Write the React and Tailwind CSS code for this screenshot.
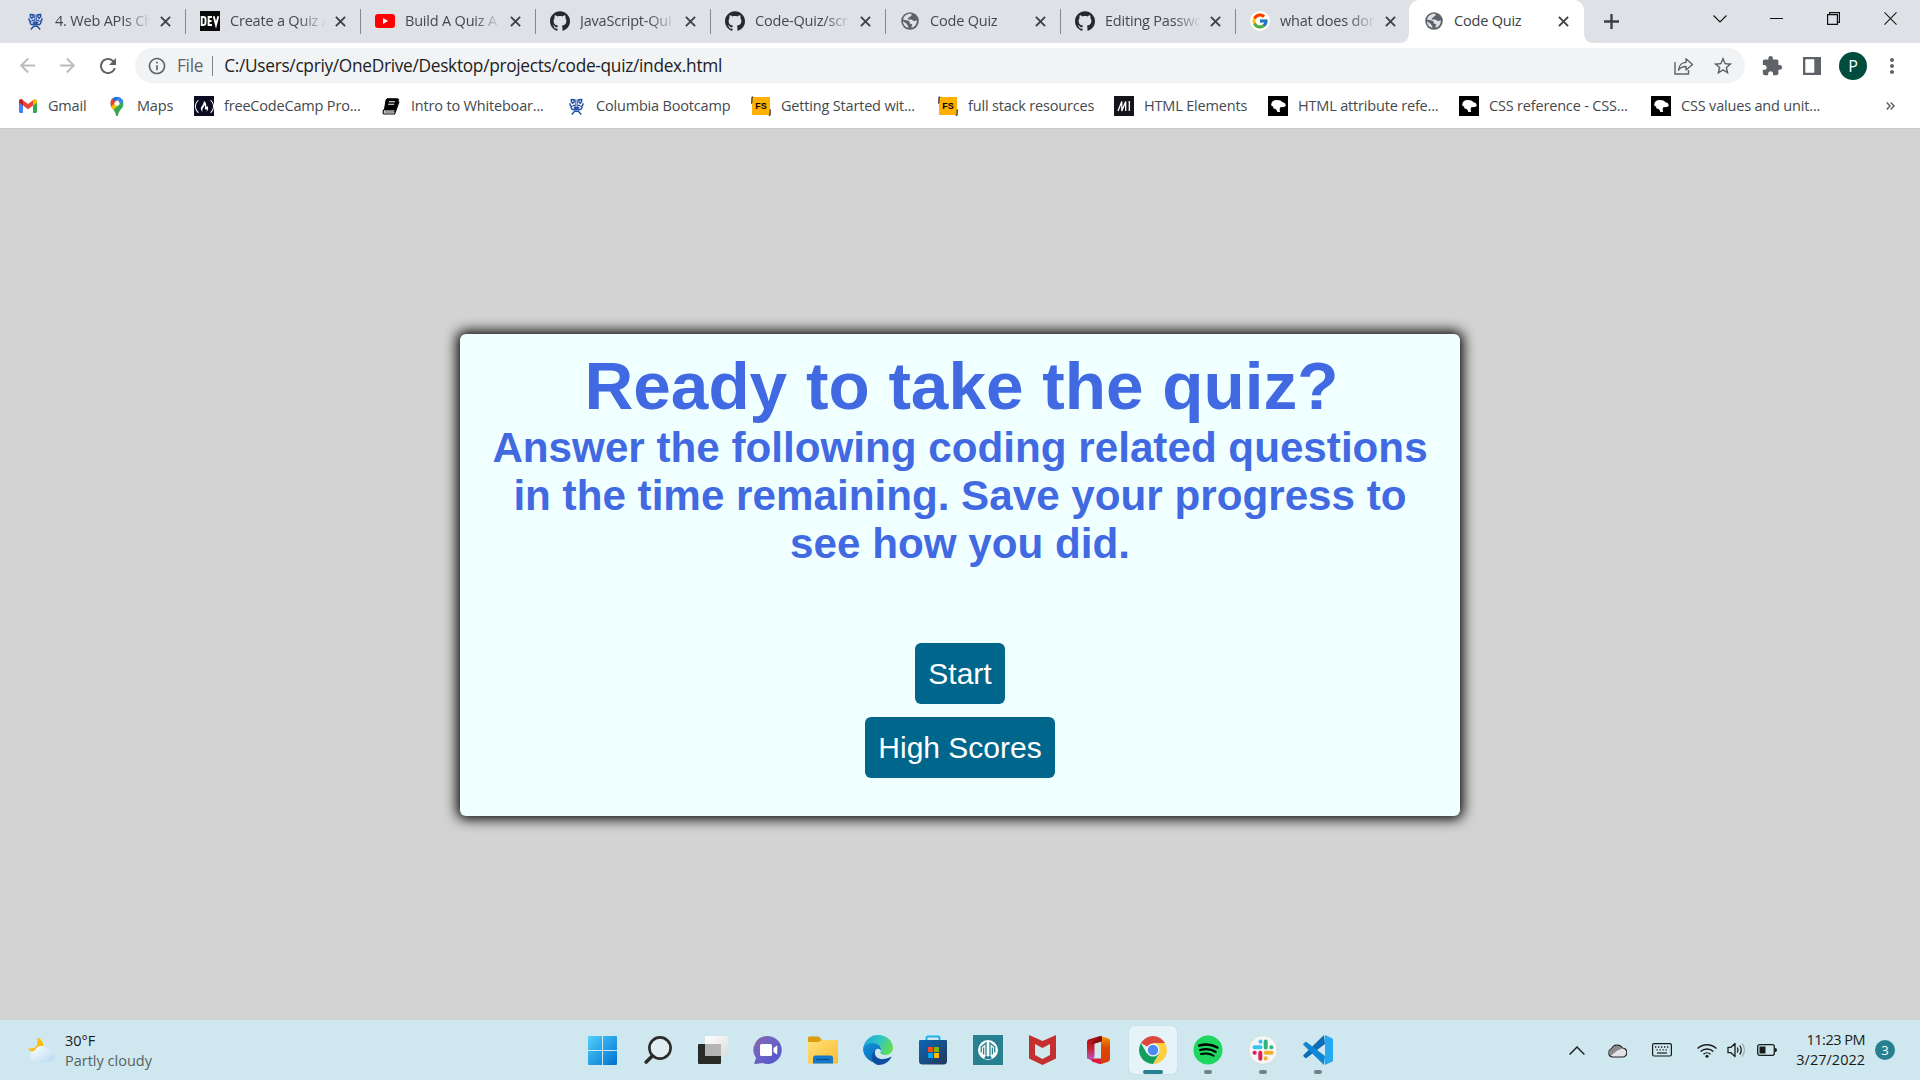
import React from "react";
import { FcGoogle } from "react-icons/fc";
import { SiGithub, SiFreecodecamp } from "react-icons/si";
import {
  MdExtension,
  MdStarBorder,
  MdMoreVert,
  MdRefresh,
  MdInfoOutline,
  MdArrowBack,
  MdArrowForward,
} from "react-icons/md";

/* ---------- favicons ---------- */

const Globe = () => (
  <svg viewBox="0 0 18 18" className="size-[18px]">
    <circle cx="9" cy="9" r="8.8" fill="#5f6368" />
    <path
      d="M10.4 1.9c.7 1.100-.1 2.300-1.300 2.500-1 .2-.9 1.500-1.900 1.700-.8.2-.6 1.300.3 1.500h2.600c1.200 0 1.500 1.100 2.300 1.400.9.3 2.300-.1 3.300-.7.5 3.300-1.600 6.600-4.900 7.500-.7-.5-.3-1.700.3-2.300.5-.6-.1-1.600-1-1.600-1.100 0-1.600-.9-1.600-1.900 0-1-1-1.300-1.900-1.500L2 7.600c.7-3.800 4.600-6.600 8.400-5.700z"
      fill="#dee1e6"
    />
    <path d="M2 9.200l3.600 2.600c.5.400.3 1 .9 1.400.7.400.9 1.200.9 2.500C4.400 15.300 2 12.600 2 9.200z" fill="#dee1e6" />
  </svg>
);

const Github = () => <SiGithub className="size-5 text-[#24292f]" />;

const Dev = () => (
  <svg viewBox="0 0 20 20" className="size-5">
    <rect width="20" height="20" fill="#0a0a0a" />
    <g fill="none" stroke="#fff" strokeWidth="1.900">
      <path d="M1.700 6h1.600q2.200 0 2.200 2.200v3.600q0 2.200-2.200 2.200H1.700z" />
      <path d="M12 6H8.600v8H12M8.600 10h2.900" />
      <path d="M13.700 5.200l2.300 8.800 2.300-8.800" />
    </g>
  </svg>
);

const YouTube = () => (
  <svg viewBox="0 0 20 14" className="h-3.5 w-5">
    <rect width="20" height="14" rx="3" fill="#f00" />
    <path d="M8 4v6l5.200-3z" fill="#fff" />
  </svg>
);

const Crown = () => (
  <svg viewBox="0 0 16 18" className="h-[17px] w-[15px]" fill="none" stroke="#1f4da3" strokeWidth="1.500">
    <path d="M2.500 1.500l3 .3v2.400L4 5.500 2.500 4zM13.500 1.500l-3 .3v2.400L12 5.500 13.500 4z" />
    <path d="M7.200 1.500v11M8.800 1.500v11" strokeWidth="1" />
    <path d="M1.300 5.500q-.8 2.500 1.500 3.500-1.500 1.500.8 3.200h8.800q2.300-1.700.8-3.200 2.300-1 1.500-3.500M4 8h2.500M9.500 8H12M5 10.300h6" />
    <path d="M3 17.500l3-3.500h4l3 3.500" />
  </svg>
);

const GoogleFav = () => (
  <span className="flex size-5 items-center justify-center rounded-full bg-white">
    <FcGoogle className="size-[18px]" />
  </span>
);

const Gmail = () => (
  <svg viewBox="0 0 18 14" className="h-3.5 w-[18px]">
    <path d="M0 2v10.700Q0 14 1.300 14H4V5z" fill="#4285f4" />
    <path d="M18 2v10.700q0 1.300-1.300 1.300H14V5z" fill="#34a853" />
    <path d="M4 1.200l5 3.800 5-3.800v5.300L9 10.200 4 6.500z" fill="#ea4335" />
    <path d="M0 2.200C0 .2 2 -.4 3.300.6L4 1.200v5.300L0 3.600z" fill="#c5221f" />
    <path d="M18 2.200c0-2-2-2.600-3.300-1.600l-.7.600v5.300l4-2.900z" fill="#fbbc04" />
  </svg>
);

const MapsPin = () => (
  <svg viewBox="0 0 14 20" className="h-[19px] w-3.5">
    <clipPath id="pin">
      <path d="M7 0c4 0 7 3 7 6.900 0 5.100-5 6.600-5.900 12.200-.2 1.200-2 1.200-2.200 0C5 13.500 0 12 0 6.900 0 3 3 0 7 0z" />
    </clipPath>
    <g clipPath="url(#pin)">
      <rect width="14" height="20" fill="#34a853" />
      <path d="M3-1h12v5L7 9z" fill="#4285f4" />
      <path d="M0 14V9l7-7 3 5-8 8z" fill="#fbbc04" />
      <path d="M-1 1l3-1 4.500 4.500L0 11z" fill="#ea4335" />
      <path d="M2 2l4-4h5L5.500 5z" fill="#1a73e8" />
    </g>
    <circle cx="7" cy="6.900" r="2.600" fill="#fff" />
  </svg>
);

const Fcc = () => (
  <span className="flex size-5 items-center justify-center bg-[#0a0a23]">
    <SiFreecodecamp className="size-[19px] text-white" />
  </span>
);

const Book = () => (
  <svg viewBox="0 0 18 17" className="h-[17px] w-[18px]">
    <path d="M5 .8h10.500q1.300 0 .9 1.300L13.200 12H2.400L4 2z" fill="#000" stroke="#000" strokeLinejoin="round" />
    <path d="M1.800 11.500Q0 15.900 2.600 16h10L17 3.500" fill="none" stroke="#000" strokeWidth="1.200" />
    <path d="M2.500 14h9.700L16 4.500" fill="none" stroke="#000" strokeWidth=".8" />
    <path d="M6.900 3.800h6M6.200 6.200h6" stroke="#fff" strokeWidth="1.100" />
  </svg>
);

const FullStack = () => (
  <span className="relative flex size-5 items-center justify-center">
    <span className="flex h-[18px] w-[18px] items-center justify-center bg-[#ffb000] font-['Liberation_Sans',sans-serif] text-[9px] font-bold leading-none text-black">
      FS
    </span>
    <svg viewBox="0 0 20 20" className="absolute inset-0 size-5" fill="none" stroke="#2b2b2b" strokeWidth="1.200">
      <path d="M2.200 .8Q.9.800.9 2v3.500Q.9 7 .2 7.500M17.800 19.500q1.300 0 1.300-1.300v-3q0-1.200.7-1.700" />
    </svg>
  </span>
);

const MdnM = () => (
  <svg viewBox="0 0 20 20" className="size-5">
    <rect width="20" height="20" fill="#15141a" />
    <path d="M4 15L7.800 5.500V15l3.900-9.500V15" fill="none" stroke="#fff" strokeWidth="1.300" strokeLinejoin="bevel" />
    <path d="M15.300 5v10" stroke="#fff" strokeWidth="1.300" />
  </svg>
);

const MdnDino = () => (
  <svg viewBox="0 0 20 20" className="size-5">
    <rect width="20" height="20" fill="#000" />
    <path
      d="M3.200 8.200C3.800 5 7 3.600 9.800 4.300c2 -.3 3.300.3 4.400 1.700l2.800 1.300.9 2.500-1.800 1.100-3.700.4c-1 .8-.6 2.600-.4 4.700H9.300c-.2-2-1.300-2.300-2.300-3.200-1.600.1-1.700-1.200-1.900-2.400C3.700 10.200 3 9.500 3.200 8.200z"
      fill="#fff"
    />
  </svg>
);

/* ---------- tab strip ---------- */

const tabs = [
  [Crown, "4. Web APIs Ch"],
  [Dev, "Create a Quiz A"],
  [YouTube, "Build A Quiz A"],
  [Github, "JavaScript-Qui"],
  [Github, "Code-Quiz/scr"],
  [Globe, "Code Quiz"],
  [Github, "Editing Passwo"],
  [GoogleFav, "what does dor"],
];

const Cross = () => (
  <svg viewBox="0 0 12 12" className="size-[11px]" stroke="#3c4043" strokeWidth="2">
    <path d="M1 1l10 10M11 1L1 11" />
  </svg>
);

const Tab = ({ icon: Icon, label, last }) => (
  <div className="flex h-[43px] w-[175px] shrink-0 items-center pb-px pl-3.5">
    <span className="flex w-5 shrink-0 justify-center">
      <Icon />
    </span>
    <span className="ml-2.5 w-24 shrink-0 overflow-hidden whitespace-nowrap text-[14.500px] leading-5 tracking-[-0.200px] text-[#45494d] [mask-image:linear-gradient(to_right,black_72%,transparent)]">
      {label}
    </span>
    <span className="ml-[9px]">
      <Cross />
    </span>
    {!last && <span className="ml-auto h-[25px] w-px bg-[#85888c]" />}
  </div>
);

const TabStrip = () => (
  <div className="flex h-[43px] bg-[#dee1e6] pl-[11px]">
    {tabs.map(([Icon, label], i) => (
      <Tab key={i} icon={Icon} label={label} last={i === tabs.length - 1} />
    ))}
    <div className="relative -ml-[2px] flex h-[43px] w-[175px] shrink-0 items-center rounded-t-[10px] bg-white pb-px pl-[15px]">
      <svg viewBox="0 0 10 10" className="absolute -left-[10px] bottom-0 size-[10px]" fill="#fff">
        <path d="M10 0v10H0Q10 10 10 0z" />
      </svg>
      <svg viewBox="0 0 10 10" className="absolute -right-[10px] bottom-0 size-[10px]" fill="#fff">
        <path d="M0 0v10h10Q0 10 0 0z" />
      </svg>
      <span className="flex w-5 justify-center">
        <Globe />
      </span>
      <span className="ml-2.5 w-[95px] text-[14.500px] leading-5 tracking-[-0.200px] text-[#3c4043]">Code Quiz</span>
      <span className="ml-[9px]">
        <Cross />
      </span>
    </div>
    <div className="flex flex-1 items-center pl-5">
      <svg viewBox="0 0 14 14" className="size-[15px]" stroke="#3c4043" strokeWidth="2.200">
        <path d="M7 0v14M0 7h14" />
      </svg>
    </div>
    <div className="flex h-[37px] items-center pr-px text-[#111]">
      <span className="flex w-[57px] justify-center">
        <svg viewBox="0 0 14 8" className="h-2 w-3.5" fill="none" stroke="currentColor" strokeWidth="1.100">
          <path d="M.5.5L7 7l6.500-6.500" />
        </svg>
      </span>
      <span className="flex w-[57px] justify-center">
        <span className="h-px w-[13px] bg-current" />
      </span>
      <span className="flex w-[57px] justify-center">
        <svg viewBox="0 0 13 13" className="size-[13px]" fill="none" stroke="currentColor" strokeWidth="1.200">
          <path d="M.6 2.600h9.800v9.800H.6zM2.600 2.600v-2h9.800v9.800h-2" />
        </svg>
      </span>
      <span className="flex w-[57px] justify-center">
        <svg viewBox="0 0 14 14" className="size-[13px]" stroke="currentColor" strokeWidth="1.100">
          <path d="M.5.5l13 13M13.500.5l-13 13" />
        </svg>
      </span>
    </div>
  </div>
);

/* ---------- toolbar ---------- */

const Toolbar = () => (
  <div className="flex h-[45px] items-center bg-white text-[#5f6368]">
    <div className="flex w-[135px] items-center pl-4">
      <MdArrowBack className="size-[23px] text-[#babcbe]" />
      <MdArrowForward className="ml-[17px] size-[23px] text-[#babcbe]" />
      <MdRefresh className="ml-[17px] size-6" />
    </div>
    <div className="flex h-[35px] w-[1610px] items-center rounded-full bg-[#f1f3f4] pl-3">
      <MdInfoOutline className="size-5" />
      <span className="ml-[10px] text-[17.300px] leading-5 tracking-[-0.300px]">File</span>
      <span className="ml-[9px] h-5 w-px bg-[#80868b]" />
      <span className="ml-[11px] text-[17.300px] leading-5 tracking-[-0.300px] text-[#202124]">
        C:/Users/cpriy/OneDrive/Desktop/projects/code-quiz/index.html
      </span>
      <span className="ml-auto flex items-center pr-[11px]">
        <svg viewBox="0 0 20 18" className="mr-[18px] h-[18px] w-5" fill="none" stroke="#5f6368" strokeWidth="1.400">
          <path d="M1 5v12h13.500v-4" />
          <path d="M4.500 13C5 8 8.500 5.500 12 5.400V1.800L18.500 7.500 12 13V9.500C9 9.500 6.500 10.300 4.500 13z" strokeLinejoin="round" />
        </svg>
        <MdStarBorder className="size-[22px]" />
      </span>
    </div>
    <div className="flex flex-1 items-center">
      <MdExtension className="ml-4 size-[22px]" />
      <svg viewBox="0 0 18 18" className="ml-5 size-[18px]">
        <path d="M0 0h18v18H0z M2.300 2.300v13.400h9V2.300z" fillRule="evenodd" fill="#5f6368" />
      </svg>
      <span className="ml-[18px] flex size-7 items-center justify-center rounded-full bg-[#004d40] text-[16px] leading-none text-white">
        P
      </span>
      <MdMoreVert className="ml-[13px] size-6" />
    </div>
  </div>
);

/* ---------- bookmarks ---------- */

const bookmarks = [
  [Gmail, "Gmail", "w-[89px]"],
  [MapsPin, "Maps", "w-[87px]"],
  [Fcc, "freeCodeCamp Pro...", "w-[187px]"],
  [Book, "Intro to Whiteboar...", "w-[185px]"],
  [Crown, "Columbia Bootcamp", "w-[185px]"],
  [FullStack, "Getting Started wit...", "w-[187px]"],
  [FullStack, "full stack resources", "w-[176px]"],
  [MdnM, "HTML Elements", "w-[154px]"],
  [MdnDino, "HTML attribute refe...", "w-[191px]"],
  [MdnDino, "CSS reference - CSS...", "w-[192px]"],
  [MdnDino, "CSS values and unit...", "w-[192px]"],
];

const Bookmarks = () => (
  <div className="flex h-10 items-center bg-white pb-1 pl-[18px]">
    {bookmarks.map(([Icon, label, width]) => (
      <div key={label} className={"flex shrink-0 items-center " + width}>
        <span className="flex w-5 justify-center">
          <Icon />
        </span>
        <span className="ml-2.5 whitespace-nowrap text-[14.500px] leading-5 tracking-[-0.180px] text-[#45494d]">
          {label}
        </span>
      </div>
    ))}
    <svg viewBox="0 0 9 8" className="ml-auto mr-[25px] h-2 w-[9px]" fill="none" stroke="#5f6368" strokeWidth="1.500">
      <path d="M.7.5L4 4 .7 7.500M4.700.5L8 4 4.700 7.500" />
    </svg>
  </div>
);

/* ---------- quiz page ---------- */

const Quiz = () => (
  <main className="flex h-[892px] justify-center border-t border-[#c8cacc] bg-[#d3d3d3] pt-[205px] font-['Liberation_Sans',Arial,sans-serif]">
    <section className="flex h-[482px] w-[1000px] flex-col items-center rounded-[6px] bg-[#f0ffff] px-[25px] pt-[13px] text-center shadow-[0_0_12.5px_2.5px_#000]">
      <h1 className="pl-[3px] text-[67.500px] font-bold leading-[77px] text-[#4169e1]">Ready to take the quiz?</h1>
      <h2 className="text-[42.190px] font-bold leading-[48px] text-[#4169e1]">
        Answer the following coding related questions in the time remaining. Save your progress to see how you did.
      </h2>
      <button className="mt-[75px] h-[61px] w-[90px] rounded-[6px] bg-[#00668c] text-[30px] leading-[61px] text-white">
        Start
      </button>
      <button className="mt-[13px] h-[61px] w-[190px] rounded-[6px] bg-[#00668c] text-[30px] leading-[61px] text-white">
        High Scores
      </button>
    </section>
  </main>
);

/* ---------- taskbar ---------- */

const Windows = () => (
  <svg viewBox="0 0 29 29" className="size-[29px]">
    <linearGradient id="win" x1="0" y1="0" x2="1" y2="1">
      <stop offset="0" stopColor="#50d0fb" />
      <stop offset="1" stopColor="#0070cf" />
    </linearGradient>
    <path
      d="M1 0h13v14H0V1q0-1 1-1zM15 0h13q1 0 1 1v13H15zM0 15h14v14H1q-1 0-1-1zM15 15h14v13q0 1-1 1H15z"
      fill="url(#win)"
    />
  </svg>
);

const Search = () => (
  <svg viewBox="0 0 28 28" className="size-7" fill="none" stroke="#2b2b2b">
    <circle cx="16" cy="12" r="10.600" strokeWidth="2.600" fill="#e0edf3" />
    <path d="M8.300 20L2.200 26" strokeWidth="3.600" strokeLinecap="round" />
  </svg>
);

const TaskView = () => (
  <svg viewBox="0 0 30 28" className="h-7 w-[30px]">
    <linearGradient id="tv" x1="0" y1="0" x2="1" y2="1">
      <stop offset="0" stopColor="#fff" />
      <stop offset="1" stopColor="#dcdcdc" />
    </linearGradient>
    <rect y="8" width="23" height="20" rx="1" fill="#2a2a29" />
    <rect x="7" width="23" height="20" rx="1" fill="url(#tv)" />
    <path d="M7 8h16v12H8q-1 0-1-1z" fill="#b4b4b4" />
  </svg>
);

const Chat = () => (
  <svg viewBox="0 0 30 30" className="size-[30px]">
    <linearGradient id="chat" x1="0" y1="0" x2="1" y2="1">
      <stop offset="0" stopColor="#92629f" />
      <stop offset=".35" stopColor="#7264c4" />
      <stop offset="1" stopColor="#4f52cc" />
    </linearGradient>
    <path d="M15 1a14 14 0 1 1-5.500 27l-7 1q-1.500 0-1-1.500L3 23A14 14 0 0 1 15 1z" fill="url(#chat)" />
    <rect x="7" y="9" width="12" height="12" rx="1.500" fill="#fff" />
    <path d="M20.500 13l3-2.200q.8-.4.8.5v7.400q0 .9-.8.5l-3-2.200z" fill="#fff" />
  </svg>
);

const Explorer = () => (
  <svg viewBox="0 0 30 28" className="h-7 w-[30px]">
    <linearGradient id="folder" x1="0" y1="0" x2="1" y2="1">
      <stop offset="0" stopColor="#ffe07a" />
      <stop offset="1" stopColor="#fcbd2d" />
    </linearGradient>
    <path d="M0 2q0-1.500 1.500-1.500h9L14 4h14.500Q30 4 30 5.500V8H0z" fill="#dd9c0b" />
    <path d="M0 6h10.500L14 4h14.500Q30 4 30 5.500v21q0 1-1 1H1q-1 0-1-1z" fill="url(#folder)" />
    <path d="M5 27.500V22q0-2.500 2.500-2.500h15Q25 19.500 25 22v5.500z" fill="#1479cc" />
    <path d="M8.500 23.500h13" stroke="#0a4b8b" strokeWidth="1.200" />
  </svg>
);

const Edge = () => (
  <svg viewBox="0 0 30 30" className="size-[30px]">
    <linearGradient id="edgeTop" x1="0" y1="0.300" x2="1" y2=".6">
      <stop offset="0" stopColor="#1fa5de" />
      <stop offset=".5" stopColor="#30c6c4" />
      <stop offset="1" stopColor="#65df49" />
    </linearGradient>
    <linearGradient id="edgeLow" x1="0" y1="0" x2="1" y2="1">
      <stop offset="0" stopColor="#1590d8" />
      <stop offset="1" stopColor="#0762b5" />
    </linearGradient>
    <path d="M0 15A15 15 0 0 1 15 0c8.500 0 15 6 15 12.800 0 4.400-3.400 7.200-7.500 7.200-3.300 0-5.600-1.300-5.200-2.700C19.500 15 18 10.500 12.500 9.500 6 8.500 1 11 0 15z" fill="url(#edgeTop)" />
    <path d="M0 15C.5 10 6 7.500 11.500 8.500c5 .9 7 3.900 6.400 7.300-.8-2.100-4.300-3-5.700 0-1.900 4.500 2.200 10.200 10.300 10.200A15 15 0 0 1 0 15z" fill="url(#edgeLow)" />
    <path d="M12.200 15.800c-1.900 4.500 2 8.900 8.300 8.300 2.900-.3 5-1.400 6.900-2.200.8-.3 1.100.2.700.8A15 15 0 0 1 15 30C7.500 28.500 7 19 12.200 15.800z" fill="#0d4f9e" />
  </svg>
);

const Store = () => (
  <svg viewBox="0 0 30 30" className="size-[30px]">
    <linearGradient id="store" x1="0" y1="0" x2="1" y2="1">
      <stop offset="0" stopColor="#0968b8" />
      <stop offset="1" stopColor="#243757" />
    </linearGradient>
    <path d="M8.500 6V3Q8.500 1.500 10 1.500h10Q21.500 1.500 21.500 3v3" fill="none" stroke="#20b0ec" strokeWidth="2" />
    <path d="M2 5h26q1 0 1 1v20q0 3.500-3.500 3.500h-21Q1 29.500 1 26V6q0-1 1-1z" fill="url(#store)" />
    <path d="M10 12h5v5h-5z" fill="#f25022" />
    <path d="M16 12h5v5h-5z" fill="#7fba00" />
    <path d="M10 18h5v5h-5z" fill="#00a4ef" />
    <path d="M16 18h5v5h-5z" fill="#ffb900" />
  </svg>
);

const Alpaca = () => (
  <svg viewBox="0 0 30 30" className="size-[30px]">
    <rect width="30" height="30" fill="#26808f" />
    <circle cx="15" cy="15" r="10" fill="#fff" />
    <path d="M8.200 17.500V12L13 8v12M21.800 17.500V12L17 8v12" fill="none" stroke="#26808f" strokeWidth="1.300" />
    <path d="M10.600 19.500v-7M19.400 19.500v-7" stroke="#26808f" strokeWidth="1.300" />
    <path d="M11 23.500l2-3.500 2 1.800L17 20l2 3.500q-4 1.500-8 0z" fill="#26808f" />
  </svg>
);

const McAfee = () => (
  <svg viewBox="0 0 27 30" className="h-[30px] w-[27px]">
    <path d="M0 0l13.500 6L27 0v23.500L13.500 30 0 23.500zM6 9v11l7.500 4 7.500-4V9l-7.500 4z" fill="#c4302f" fillRule="evenodd" />
  </svg>
);

const Office = () => (
  <svg viewBox="0 0 24 30" className="h-[30px] w-6">
    <linearGradient id="offL" x1="0" y1="0" x2="0" y2="1">
      <stop offset="0" stopColor="#9e0b12" />
      <stop offset=".5" stopColor="#c91f2e" />
      <stop offset="1" stopColor="#b65bc4" />
    </linearGradient>
    <linearGradient id="offR" x1="0" y1="0" x2="0" y2="1">
      <stop offset="0" stopColor="#f19a00" />
      <stop offset=".4" stopColor="#df4a07" />
      <stop offset="1" stopColor="#d73b02" />
    </linearGradient>
    <path d="M14 1L2.500 4.500Q1 5 1 7v16.500L4.500 25l3-2q1-.7 1-2V8.500L15.500 6.500V1z" fill="url(#offL)" />
    <path d="M14 1l8 2.200Q24 3.700 24 6v18q0 2.200-2 2.800L15 29V6.500z" fill="url(#offR)" />
    <path d="M4.500 23.500H15V29h-1.500L6 26.500z" fill="#d61e3c" />
    <path d="M14 1l2 .6v4.600l-7.500 2.300L5 9z" fill="#8b0b0c" />
  </svg>
);

const Chrome = () => (
  <svg viewBox="0 0 28 28" className="size-7">
    <path d="M14 14L1.880 7A14 14 0 0 1 26.120 7z" fill="#db4a3c" />
    <path d="M14 14V7h12.120A14 14 0 0 1 14 28l6-10.500z" fill="#ffce44" />
    <path d="M14 14l6 3.500L14 28A14 14 0 0 1 1.880 7l6 10.500z" fill="#10a05c" />
    <circle cx="14" cy="14" r="6.600" fill="#f4f6f7" />
    <circle cx="14" cy="14" r="5.200" fill="#4a8af4" />
  </svg>
);

const Spotify = () => (
  <svg viewBox="0 0 30 30" className="size-[30px]" fill="none" stroke="#000" strokeLinecap="round">
    <circle cx="15" cy="15" r="14.500" fill="#1ed760" stroke="none" />
    <path d="M6.300 10.600c6-1.700 13-1 18 1.900" strokeWidth="2.600" />
    <path d="M7.200 15c5.300-1.500 11-.8 15.300 1.800" strokeWidth="2.300" />
    <path d="M7.800 19.100c4.500-1.200 9-.6 12.800 1.700" strokeWidth="1.900" />
  </svg>
);

const Slack = () => (
  <svg viewBox="0 0 30 30" className="size-[30px]" strokeWidth="4" strokeLinecap="round">
    <circle cx="15" cy="15" r="14.400" fill="#f7f6f6" stroke="#cfcfcf" strokeWidth=".7" />
    <path d="M6.500 12.300h6M12.500 6.500v.2" stroke="#36c5f0" />
    <path d="M17.700 6.500v6M23.500 12.300h-.2" stroke="#2eb67d" />
    <path d="M17.700 17.700h6M17.700 23.500v-.2" stroke="#ecb22e" />
    <path d="M12.300 17.700v6M6.500 17.700h.2" stroke="#e01e5a" />
  </svg>
);

const VsCode = () => (
  <svg viewBox="0 0 30 30" className="size-[30px]">
    <path d="M22 9L3.500 23q-.6.500-1.200 0L.5 21.300q-.6-.7 0-1.300L21 0z" fill="#0a6db5" />
    <path d="M22 21L3.500 7q-.6-.5-1.200 0L.5 8.700q-.6.700 0 1.300L21 30z" fill="#0f87d3" />
    <path d="M22 0l7 3.200q1 .5 1 1.600v20.400q0 1.100-1 1.600L22 30q.5-.5 0-2z" fill="#25a7f2" />
  </svg>
);

const apps = [
  [Windows],
  [Search],
  [TaskView],
  [Chat],
  [Explorer],
  [Edge],
  [Store],
  [Alpaca],
  [McAfee],
  [Office],
  [Chrome, "active"],
  [Spotify, "open"],
  [Slack, "open"],
  [VsCode, "open"],
];

const Weather = () => (
  <svg viewBox="0 0 30 26" className="h-[26px] w-[30px]">
    <linearGradient id="cloud" x1="0" y1="0" x2="1" y2="1">
      <stop offset="0" stopColor="#fff" />
      <stop offset="1" stopColor="#b5d7f0" />
    </linearGradient>
    <path d="M10.500.5q6 2.500 5.800 8.500Q15 15 8 15.300 3 15 1 11.300 8 12.500 10 8q1-3.500.5-7.500z" fill="#fbbd0f" />
    <path d="M8.500 25a5.800 5.800 0 0 1-.6-11.400A7 7 0 0 1 20.300 12a6.600 6.600 0 1 1 2.600 13z" fill="url(#cloud)" />
  </svg>
);

const Taskbar = () => (
  <footer className="flex h-[60px] items-center bg-[#cfe8ef] text-[14.500px] text-[#1b1b1b]">
    <div className="flex w-[575px] items-center pl-[27px]">
      <Weather />
      <div className="ml-2 pt-[2px] leading-5">
        <div>30°F</div>
        <div className="text-[#565f62]">Partly cloudy</div>
      </div>
    </div>
    <div className="flex items-center">
      {apps.map(([Icon, state], i) => (
        <div key={i} className="flex w-[55px] justify-center">
          <div
            className={
              "relative flex size-12 items-center justify-center rounded-[5px] " +
              (state === "active" ? "bg-[#e6f3f8] shadow-[0_0_1px_#9fb8c0]" : "")
            }
          >
            <Icon />
            {state === "active" && <span className="absolute bottom-0 h-1 w-5 rounded-full bg-[#26808f]" />}
            {state === "open" && <span className="absolute bottom-0 h-1 w-2 rounded-full bg-[#728387]" />}
          </div>
        </div>
      ))}
    </div>
    <div className="ml-auto flex items-center pr-[25px]">
      <svg viewBox="0 0 16 9" className="h-[9px] w-4" fill="none" stroke="#1b1b1b" strokeWidth="1.400">
        <path d="M.6 8.400L8 1l7.400 7.400" />
      </svg>
      <svg viewBox="0 0 20 15" className="ml-[22px] h-[15px] w-5">
        <path d="M5 14a4.300 4.300 0 0 1-.4-8.200A6 6 0 0 1 15.300 5 4.500 4.500 0 0 1 15.500 14z" fill="#e3e3e6" stroke="#222" strokeWidth="1.200" />
        <path d="M1.500 10.500A3.800 3.800 0 0 1 5 6.300 5.400 5.400 0 0 1 14.800 5.500L10 7.800 4 12.500z" fill="#8b8b8b" />
      </svg>
      <svg viewBox="0 0 20 14" className="ml-[25px] h-3.5 w-5" fill="none" stroke="#1b1b1b">
        <rect x=".6" y=".6" width="18.800" height="12.400" rx="1.500" strokeWidth="1.200" />
        <path d="M3 4h14M4.500 6.800h12" strokeWidth="1.300" strokeDasharray="1.300 1.700" />
        <path d="M5 10h10" strokeWidth="1.200" />
      </svg>
      <svg viewBox="0 0 20 15" className="ml-[25px] h-[15px] w-5" fill="none" stroke="#1b1b1b" strokeWidth="1.400">
        <path d="M.6 5.600a13.300 13.300 0 0 1 18.800 0M3.600 8.600a9 9 0 0 1 12.800 0M6.500 11.300a5 5 0 0 1 7 0" />
        <circle cx="10" cy="13.200" r="1.500" fill="#1b1b1b" stroke="none" />
      </svg>
      <svg viewBox="0 0 20 16" className="ml-2.5 h-4 w-5" fill="none" stroke="#1b1b1b" strokeWidth="1.300">
        <path d="M1 5.300h3L8 1.500v13l-4-3.800H1z" strokeLinejoin="round" />
        <path d="M10.300 5.500q1.500 2.500 0 5" />
        <path d="M12.700 3.500q3 4.500 0 9" />
        <path d="M15 1.500q5 6.500 0 13" stroke="#9bb0b6" />
      </svg>
      <svg viewBox="0 0 20 12" className="ml-2.5 h-3 w-5">
        <rect x=".7" y=".7" width="16.600" height="10.600" rx="2" fill="none" stroke="#1b1b1b" strokeWidth="1.300" />
        <rect x="2.500" y="2.500" width="6" height="7" fill="#1b1b1b" />
        <path d="M18 4q2 0 2 2t-2 2z" fill="#1b1b1b" />
      </svg>
      <div className="ml-[18px] w-[70px] text-right leading-5">
        <div className="tracking-[-0.500px]">11:23 PM</div>
        <div>3/27/2022</div>
      </div>
      <span className="ml-2.5 flex size-5 items-center justify-center rounded-full bg-[#26808f] text-[13px] leading-none text-white">
        3
      </span>
    </div>
  </footer>
);

export default function App() {
  return (
    <div className="h-[1080px] w-[1920px] overflow-hidden font-['Open_Sans','Noto_Sans',sans-serif]">
      <TabStrip />
      <Toolbar />
      <Bookmarks />
      <Quiz />
      <Taskbar />
    </div>
  );
}
